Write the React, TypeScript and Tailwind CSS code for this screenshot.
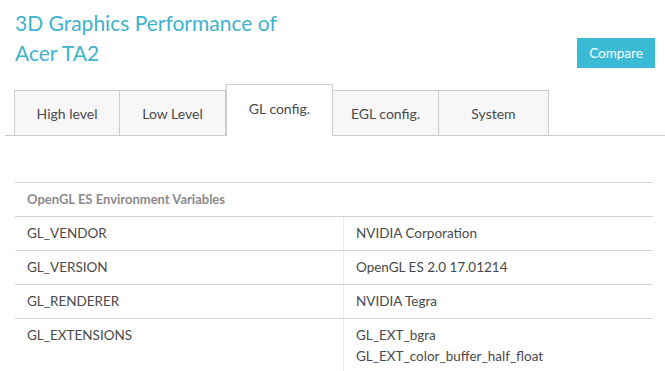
import React from "react";

const tabs = ["High level", "Low Level", "GL config.", "EGL config.", "System"];
const active = "GL config.";

const rows: { name: string; values: string[] }[] = [
  { name: "GL_VENDOR", values: ["NVIDIA Corporation"] },
  { name: "GL_VERSION", values: ["OpenGL ES 2.0 17.01214"] },
  { name: "GL_RENDERER", values: ["NVIDIA Tegra"] },
  {
    name: "GL_EXTENSIONS",
    values: ["GL_EXT_bgra", "GL_EXT_color_buffer_half_float"],
  },
];

export default function App() {
  return (
    <div
      className="h-[371px] w-[665px] overflow-hidden bg-white text-[#4a4a4a]"
      style={{ fontFamily: "Lato, 'Noto Sans', sans-serif" }}
    >
      {/* header */}
      <div className="flex items-start justify-between pl-[15px] pr-[10px] pt-[8px]">
        <h1 className="text-[21px] leading-[30px] font-normal text-[#3eb3cc]">
          3D Graphics Performance of
          <br />
          Acer TA2
        </h1>
        <button className="mt-[30px] h-[30px] w-[78px] bg-[#3bbad6] text-[13.5px] text-white">
          Compare
        </button>
      </div>

      {/* tabs */}
      <div className="ml-[5px] mt-[16px] flex items-end border-b border-[#cccccc] pl-[9px]">
        {tabs.map((t, i) =>
          t === active ? (
            <div
              key={t}
              className="-mb-px flex h-[52px] w-[107px] items-center justify-center border border-b-0 border-[#cccccc] bg-white pb-[5px] text-[14px]"
            >
              {t}
            </div>
          ) : (
            <div
              key={t}
              className={`flex h-[45px] items-center justify-center border-t border-r border-[#cccccc] bg-[#f7f7f7] text-[14px] ${
                i === tabs.length - 1 ? "w-[110px]" : "w-[106px]"
              } ${i === 0 ? "border-l" : ""}`}
            >
              {t}
            </div>
          )
        )}
      </div>

      {/* table */}
      <div className="ml-[15px] mt-[46px] w-[638px] border-t border-[#d5d5d5]">
        <div className="flex h-[34px] items-center border-b border-[#d5d5d5] px-[12px] text-[13px] font-bold text-[#8a8a8a]">
          OpenGL ES Environment Variables
        </div>
        {rows.map((r) => (
          <div key={r.name} className="flex border-b border-[#d5d5d5] text-[13.5px]">
            <div className="w-[329px] shrink-0 border-r border-[#ececec] px-[12px] pt-[8px] pb-[8px] leading-[17px]">
              {r.name}
            </div>
            <div className="flex-1 px-[12px] pt-[8px] pb-[8px] leading-[17px]">
              {r.values.map((v, i) => (
                <div key={v} className={i > 0 ? "mt-[4px]" : ""}>
                  {v}
                </div>
              ))}
              {r.values.length > 1 && <div className="h-[12px]" />}
            </div>
          </div>
        ))}
      </div>
    </div>
  );
}
